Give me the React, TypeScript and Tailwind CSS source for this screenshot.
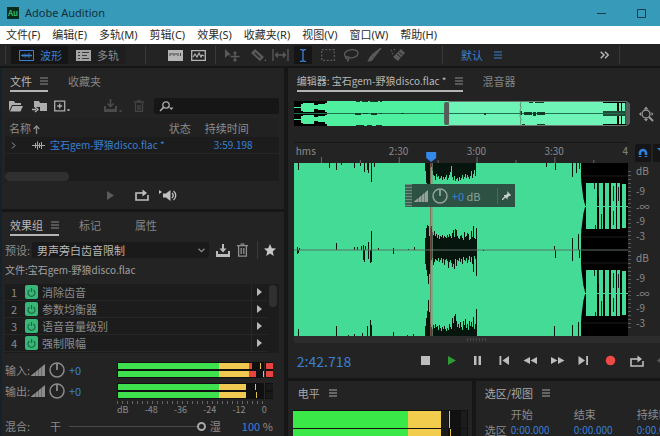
import React from 'react';
import clsx from 'clsx';

const MENUS = ['文件(F)', '编辑(E)', '多轨(M)', '剪辑(C)', '效果(S)', '收藏夹(R)', '视图(V)', '窗口(W)', '帮助(H)'];
const EFFECTS = ['消除齿音', '参数均衡器', '语音音量级别', '强制限幅'];
const FILE_NAME = '宝石gem-野狼disco.flac';

// One unit wide columns growing from a base line, dir 1 goes down and -1 goes up
const columns = (x0: number, base: number, dir: number, depths: number[]): string =>
  depths.map((d, i) => `M${x0 + i} ${base}h1v${d * dir}h-1z`).join('');

const spikes = (base: number, dir: number, list: number[][]): string =>
  list.map(([x, d]) => `M${x} ${base}h1v${d * dir}h-1z`).join('');

const BREAK_EDGE = [
  8, 20, 22, 24, 22, 5, 4, 8, 12, 13, 17, 11, 14, 13, 16, 15, 13, 17, 14, 16, 14, 12, 17, 15, 12, 9, 3, 14, 17, 13, 18, 16, 15,
  18, 14, 17, 15, 12, 16, 14, 11, 15, 12, 14, 16, 13, 8, 15, 11, 7, 13,
];
const BREAK_UP = [
  12, 22, 25, 24, 14, 22, 24, 18, 15, 19, 14, 16, 12, 15, 11, 14, 13, 15, 12, 14, 13, 12, 15, 13, 16, 14, 12, 17, 20, 13, 21, 20,
  14, 12, 11, 14, 15, 12, 10, 18, 13, 14, 17, 16, 10, 11, 19, 13, 24, 12, 11, 22,
];
const BREAK_DOWN = [
  14, 20, 26, 34, 24, 12, 10, 8, 15, 12, 9, 10, 11, 8, 12, 10, 8, 13, 9, 15, 10, 9, 11, 18, 12, 10, 13, 17, 14, 19, 9, 16, 10,
  11, 8, 12, 9, 14, 7, 10, 11, 8, 13, 10, 6, 12, 7, 14, 22, 6, 9, 26,
];
const BREAK_LOW = [
  10, 18, 25, 36, 24, 12, 9, 7, 11, 8, 12, 9, 10, 6, 11, 8, 5, 9, 7, 10, 7, 5, 8, 6, 12, 9, 7, 18, 13, 20, 22, 15, 9, 12, 8, 14,
  9, 6, 15, 11, 17, 8, 12, 6, 15, 10, 14, 9, 19, 7, 12, 27,
];

const TOP_SPIKES = [[4, 7], [35, 5], [42, 7], [47, 2], [60, 5], [66, 3], [70, 9], [73, 7], [74, 10], [77, 19], [80, 4], [253, 4], [262, 7], [279, 14], [283, 10], [286, 6]];
const MID_UP = [[3, 3], [5, 2], [42, 7], [60, 3], [63, 3], [67, 4], [69, 5], [71, 4], [74, 8], [77, 19], [84, 2], [99, 2], [114, 1], [120, 3], [261, 4], [279, 12], [285, 16]];
const MID_DOWN = [[3, 4], [4, 3], [69, 10], [70, 12], [74, 9], [76, 13], [77, 12], [99, 4], [189, 1], [262, 8], [279, 11], [286, 8]];
const LOW_SPIKES = [[4, 7], [42, 10], [54, 1], [60, 2], [68, 3], [73, 10], [76, 16], [77, 11], [99, 4], [113, 1], [119, 2], [261, 10], [279, 11], [285, 14]];

interface IconProps {
  w?: number;
  h?: number;
  className?: string;
  children: React.ReactNode;
}

const Icon: React.FC<IconProps> = ({ w = 16, h = 16, className, children }) => (
  <svg width={w} height={h} viewBox={`0 0 ${w} ${h}`} fill="none" stroke="currentColor" strokeWidth="1.3" className={clsx('shrink-0', className)} aria-hidden="true">
    {children}
  </svg>
);

const Burger: React.FC<{ className?: string }> = ({ className }) => (
  <Icon w={8} h={8} className={className}>
    <path d="M0 1h8M0 4h8M0 7h8" strokeWidth="1" />
  </Icon>
);

const LoopIcon = () => (
  <Icon w={14} h={12}>
    <path d="M4 4H1v7h12V6" strokeWidth="1.6" />
    <path d="M4 4h4" strokeWidth="1.6" />
    <path d="M7.500 0.500L12 4l-4.500 3.500z" fill="currentColor" stroke="none" />
  </Icon>
);

const VolumeRamp = () => (
  <Icon w={14} h={12}>
    <path d="M0 11.500L14 0v12H0z" fill="currentColor" stroke="none" />
    <path d="M4.500 12V6M7.500 12V4M10.500 12V2" stroke="#000" strokeOpacity=".35" strokeWidth=".7" />
  </Icon>
);

const Knob = () => (
  <Icon w={16} h={16}>
    <circle cx="8" cy="8" r="7" strokeWidth="1.5" />
    <path d="M8 1v7" strokeWidth="1.8" />
  </Icon>
);

interface TabsProps {
  active: string;
  others: string[];
  small?: boolean;
}

const PanelTabs: React.FC<TabsProps> = ({ active, others, small }) => (
  <div role="tablist" className="flex h-6 shrink-0 items-end gap-5">
    <button role="tab" aria-selected="true" className="flex h-5 items-center gap-2 whitespace-nowrap border-b-2 border-[#b4b4b4] text-[#b8b8b8]">
      <span className={clsx(small && 'text-[10px]')}>{active}</span>
      <Burger className="text-[#8c8c8c]" />
    </button>
    {others.map(name => (
      <button key={name} role="tab" aria-selected="false" className="h-5 min-w-9 whitespace-nowrap border-b-2 border-transparent text-left text-[#858585]">
        {name}
      </button>
    ))}
  </div>
);

const TitleBar = () => (
  <header className="flex h-[26px] shrink-0 items-center bg-[#379ab9] pl-[7px] pr-[14px]">
    <span className="flex h-3 w-3 items-center justify-center bg-[#082c1c] text-[8px] font-bold leading-none text-[#2fb56b]">Au</span>
    <h1 className="ml-1.5 flex-1 font-['Noto_Sans',sans-serif] text-[11px] leading-4 text-[#12303b]">Adobe Audition</h1>
    <button aria-label="最小化" className="text-[#173c49]">
      <Icon w={9} h={9}>
        <path d="M0 4.500h9" strokeWidth="1" />
      </Icon>
    </button>
    <button aria-label="最大化" className="ml-[31px] text-[#173c49]">
      <Icon w={9} h={9}>
        <path d="M.5.5h8v8h-8z" strokeWidth="1" />
      </Icon>
    </button>
  </header>
);

const MenuBar = () => (
  <nav className="flex h-[18px] shrink-0 items-center gap-3 bg-white pl-1.5 font-['Noto_Sans','Noto_Sans_CJK_SC',sans-serif] text-[#2c2c2c]">
    {MENUS.map(m => (
      <button key={m} className="whitespace-nowrap">{m}</button>
    ))}
  </nav>
);

const Divider = ({ className }: { className?: string }) => <span className={clsx('h-[18px] w-px shrink-0 bg-[#393939]', className)} />;

const Toolbar = () => (
  <div className="flex h-[22px] shrink-0 items-center bg-[#232323] pl-[5px] text-[#8b8b8b]">
    <Divider />
    <div className="ml-[5px] flex h-[18px] bg-[#1e1e1e]">
      <button aria-pressed="true" className="flex w-[57px] items-center gap-1.5 bg-[#151515] pl-2 text-[#3a80d2]">
        <Icon w={15} h={11}>
          <path d="M.5.5h14v10H.5z" strokeWidth="1" />
          <path d="M2 5.500h11M4 4v3M6 3.500v4M8 4v3M10 3v5M12 4.500v2" strokeWidth="1" />
        </Icon>
        波形
      </button>
      <button aria-pressed="false" className="flex w-[57px] items-center gap-1.5 pl-2">
        <Icon w={15} h={11}>
          <path d="M0 0h15v11H0z" fill="#a4a4a4" stroke="none" />
          <path d="M2 2.500h2M6 2.500h7M2 5.500h2M6 5.500h5M2 8.500h2M6 8.500h7" stroke="#3c3c3c" strokeWidth="1" />
        </Icon>
        多轨
      </button>
    </div>
    <Divider className="ml-5" />
    <button aria-label="频谱频率显示器" className="ml-[22px] text-[#b5b5b5]">
      <Icon w={15} h={11}>
        <path d="M0 0h15v11H0z" fill="currentColor" stroke="none" />
        <path d="M2 6V3M4 5V3M6 6V3M8 5V3M10 6V3M12.500 6V3" stroke="#444" strokeWidth="1" />
      </Icon>
    </button>
    <button aria-label="频谱音高显示器" className="ml-2 text-[#b5b5b5]">
      <Icon w={15} h={11}>
        <path d="M.7.7h13.600v9.600H.7z" />
        <path d="M2 7l2-3 2 3 2-4 2 4 1-2 2 1" strokeWidth="1.200" />
      </Icon>
    </button>
    <Divider className="ml-[9px]" />
    <button aria-label="移动工具" className="ml-2 text-[#5a5a5a]">
      <Icon w={16} h={14}>
        <path d="M1 1v9l2.500-2.500L7 7z" fill="currentColor" stroke="none" />
        <path d="M11 4v9M6.500 8.500h9M9.500 5.500L11 4l1.500 1.500M9.500 11.500L11 13l1.500-1.500" />
      </Icon>
    </button>
    <button aria-label="切断所选剪辑工具" className="ml-[10px] text-[#5a5a5a]">
      <Icon w={16} h={14}>
        <path d="M5 1l9 8-4 4-9-8z" fill="currentColor" stroke="none" />
        <path d="M5 5l5 4.500" stroke="#232323" />
        <path d="M14 13h2v-2z" fill="currentColor" stroke="none" />
      </Icon>
    </button>
    <button aria-label="滑动工具" className="ml-1.5 text-[#5a5a5a]">
      <Icon w={17} h={12}>
        <path d="M1 0v12M16 0v12M4 6h9M6 3.500L3.500 6 6 8.500M11 3.500L13.500 6 11 8.500" />
      </Icon>
    </button>
    <button aria-label="时间选择工具" aria-pressed="true" className="ml-[5px] flex h-[18px] w-[18px] items-center justify-center bg-[#151515] text-[#3a80d2]">
      <Icon w={8} h={13}>
        <path d="M1 .7h2l1 1 1-1h2M1 12.300h2l1-1 1 1h2M4 2v9" />
      </Icon>
    </button>
    <button aria-label="框选工具" className="ml-[9px] text-[#5a5a5a]">
      <Icon w={14} h={12}>
        <path d="M.7.7h12.600v10.600H.7z" strokeDasharray="2 1.600" />
      </Icon>
    </button>
    <button aria-label="套索选择工具" className="ml-2 text-[#5a5a5a]">
      <Icon w={16} h={13}>
        <path d="M4 8.500C0 7 1 2.500 6 1.200s9 0 9 3-5 5.300-8 4.500c-2-.6-3-1.800-4-.5s1 2 2 1.300 1 2-1 3" />
      </Icon>
    </button>
    <button aria-label="画笔选择工具" className="ml-[7px] text-[#5a5a5a]">
      <Icon w={16} h={14}>
        <path d="M15 0L8 9 6 7z" fill="currentColor" />
        <path d="M5.500 7.500l2.500 2.500c-1 3-4 3.500-7 3.500 2-1 1.500-5 4.500-6z" fill="currentColor" stroke="none" />
      </Icon>
    </button>
    <button aria-label="污点修复画笔工具" className="ml-2 text-[#5a5a5a]">
      <Icon w={16} h={14}>
        <path d="M11 1l4 4-7 8-5-4z" fill="currentColor" stroke="none" />
        <path d="M7 6l4 3.500M9 4l3.500 3.200" stroke="#232323" strokeWidth="1" />
        <path d="M1 3l1-1M4 2l1-1M2 6l1-1" />
      </Icon>
    </button>
    <Divider className="ml-9" />
    <button className="ml-[18px] flex items-center gap-[11px] whitespace-nowrap text-[#3a80d2]">
      默认
      <Burger />
    </button>
    <span className="flex-1" />
    <button aria-label="更多" className="text-[#b5b5b5]">
      <Icon w={9} h={8}>
        <path d="M.7.7L4 4 .7 7.300M5 .7L8.300 4 5 7.300" strokeWidth="1.500" />
      </Icon>
    </button>
    <Divider className="ml-[10px] mr-10" />
  </div>
);

const FilesPanel = () => (
  <section className="flex h-[141px] shrink-0 flex-col bg-[#232323] pl-[3px] pr-[5px]">
    <div className="pl-[5px]">
      <PanelTabs active="文件" others={['收藏夹']} />
    </div>
    <div className="mt-1.5 flex h-4 items-center pl-1 text-[#adadad]">
      <button aria-label="打开文件">
        <Icon w={14} h={12}>
          <path d="M0 11V1h5l1 2h6v2H3z" fill="currentColor" stroke="none" />
          <path d="M3.500 6H14l-2.500 5.500H1z" fill="currentColor" stroke="none" />
        </Icon>
      </button>
      <button aria-label="导入文件" className="ml-[9px]">
        <Icon w={15} h={13}>
          <path d="M2 7V1h5l1 2h7v8H8V7z" fill="currentColor" stroke="none" />
          <path d="M0 9.500h4M3 7l3 2.500L3 12" strokeWidth="1.500" />
        </Icon>
      </button>
      <button aria-label="新建文件" className="ml-[7px]">
        <Icon w={16} h={12}>
          <path d="M.7 1.200h10v9.600H.7zM5.700 3.500v5M3.200 6h5" />
          <path d="M13.500 9h2v2h-2z" fill="currentColor" stroke="none" />
        </Icon>
      </button>
      <button aria-label="插入到多轨混音中" className="ml-[34px] text-[#4a4a4a]">
        <Icon w={18} h={14}>
          <path d="M0 7h2v3h9V7h2v6H0z" fill="currentColor" stroke="none" />
          <path d="M6.500 0v7M3.500 4.500l3 3 3-3" strokeWidth="1.600" />
          <path d="M15.500 11h2v2h-2z" fill="currentColor" stroke="none" />
        </Icon>
      </button>
      <button aria-label="删除文件" className="ml-3 text-[#444]">
        <Icon w={10} h={12}>
          <path d="M0 2h10M3 1h4M1.500 3v8.300h7V3M4 5v5M6 5v5" />
        </Icon>
      </button>
      <div className="relative ml-[10px] h-4 flex-1 rounded-xs bg-[#161616]">
        <Icon w={15} h={11} className="absolute left-[5px] top-[3px]">
          <circle cx="7" cy="4" r="3.200" />
          <path d="M4.700 6.300L1 10" strokeWidth="1.600" />
          <path d="M10 6.500h4.500l-2.200 2.500z" fill="currentColor" stroke="none" />
        </Icon>
        <input type="search" aria-label="搜索文件" className="h-4 w-full bg-transparent pl-6 outline-none" />
      </div>
    </div>
    <div className="mt-1 flex flex-1 flex-col bg-[#1c1c1c]">
      <table className="w-full table-fixed border-collapse text-left">
        <colgroup>
          <col />
          <col className="w-9" />
          <col className="w-[74px]" />
        </colgroup>
        <thead className="bg-[#212121] text-[#8c8c8c]">
          <tr className="h-[19px]">
            <th className="p-0 pl-1 font-normal">
              名称
              <Icon w={7} h={9} className="ml-0.5 inline align-[-1px]">
                <path d="M3.500 9V1M.7 4l2.800-3 2.800 3" />
              </Icon>
            </th>
            <th className="p-0 font-normal">状态</th>
            <th className="whitespace-nowrap p-0 font-normal">持续时间</th>
          </tr>
        </thead>
        <tbody className="text-[10px] text-[#3a80d2]">
          <tr className="h-4 border-b border-[#262626]">
            <td className="p-0">
              <div className="flex items-center pl-[6px]">
                <Icon w={5} h={7} className="text-[#9a9a9a]">
                  <path d="M1 .5l3 3-3 3" strokeWidth="1" />
                </Icon>
                <Icon w={13} h={9} className="ml-[16px] text-[#a8a8a8]">
                  <path d="M0 4.500h13M3.500 2v5M5.500.5v8M7.500 2v5M9.500 1v7" strokeWidth="1" />
                </Icon>
                <span className="ml-[5px] whitespace-nowrap">{FILE_NAME} *</span>
              </div>
            </td>
            <td className="p-0" />
            <td className="p-0 pl-[9px]">3:59.198</td>
          </tr>
        </tbody>
      </table>
      <div className="mt-auto h-[9px] w-16 rounded-full bg-[#303030]" />
    </div>
    <div className="flex h-7 shrink-0 items-center justify-center gap-5 text-[#c0c0c0]">
      <button aria-label="播放" className="text-[#5a5a5a]">
        <Icon w={9} h={9}>
          <path d="M1 0l7 4.500L1 9z" fill="currentColor" stroke="none" />
        </Icon>
      </button>
      <div className="flex items-center gap-[10px]">
        <button aria-label="循环播放">
          <LoopIcon />
        </button>
        <button aria-label="自动播放">
          <Icon w={19} h={13}>
            <path d="M0 1l3 2-3 2z" fill="currentColor" stroke="none" />
            <path d="M4 4.500h3L11.500 1v11L7 8.500H4z" fill="currentColor" stroke="none" />
            <path d="M13 4c1.500 1.500 1.500 3.500 0 5M14.500 2c3 2.500 3 6.500 0 9" />
          </Icon>
        </button>
      </div>
    </div>
  </section>
);

interface MeterProps {
  bars: number[][];
  clip: boolean;
}

// Each bar: end of yellow, end of red, peak mark
const Meter: React.FC<MeterProps> = ({ bars, clip }) => (
  <svg viewBox="0 0 155 16" preserveAspectRatio="none" className="h-4 w-full bg-[#101010]" shapeRendering="crispEdges" aria-hidden="true">
    {bars.map(([yellow, red, peak], i) => (
      <g key={i}>
        <rect x="1" y={1 + i * 8} width="100" height="6" fill="#3fe04e" />
        <rect x="101" y={1 + i * 8} width={yellow - 101} height="6" fill="#efc950" />
        <rect x={yellow} y={1 + i * 8} width={red - yellow} height="6" fill="#e8443f" />
        <rect x={peak} y={1 + i * 8} width="1" height="6" fill="#e3c34c" />
        <rect x="146" y="0" width="1" height="16" fill="#2a2a2a" />
        <rect x="148" y={1 + i * 8} width="7" height="6" fill={clip ? '#e8443f' : '#191919'} />
      </g>
    ))}
  </svg>
);

const LevelRow: React.FC<{ label: string; children: React.ReactNode }> = ({ label, children }) => (
  <div className="flex h-[21px] items-center pr-[6px]">
    <span className="w-[26px] shrink-0 whitespace-nowrap">{label}</span>
    <VolumeRamp />
    <button aria-label={`${label} 增益`} className="ml-1 shrink-0">
      <Knob />
    </button>
    <span className="ml-1 w-12 shrink-0 text-[#3a80d2]">+0</span>
    <div className="min-w-0 flex-1">{children}</div>
  </div>
);

const EffectsPanel = () => (
  <section className="flex min-h-0 flex-1 flex-col overflow-hidden bg-[#232323] pl-[3px] pr-[5px] text-[#8b8b8b]">
    <div className="pl-[5px]">
      <PanelTabs active="效果组" others={['标记', '属性']} />
    </div>
    <div className="mt-1.5 flex h-4 shrink-0 items-center">
      <label htmlFor="preset" className="w-[27px] whitespace-nowrap">预设:</label>
      <div className="relative h-4 flex-1">
        <select id="preset" defaultValue="deess" className="h-4 w-full appearance-none rounded-xs bg-[#1a1a1a] pl-[5px] text-[#b8b8b8] outline-none">
          <option value="deess">男声旁白齿音限制</option>
        </select>
        <Icon w={7} h={5} className="pointer-events-none absolute right-1 top-1.5">
          <path d="M.5.7l3 3 3-3" />
        </Icon>
      </div>
      <button aria-label="保存预设" className="ml-[7px] text-[#bababa]">
        <Icon w={14} h={13}>
          <path d="M0 7h2v3h10V7h2v6H0z" fill="currentColor" stroke="none" />
          <path d="M7 0v5" strokeWidth="2" />
          <path d="M3.500 4.500h7L7 8.500z" fill="currentColor" stroke="none" />
        </Icon>
      </button>
      <button aria-label="删除预设" className="ml-[7px] text-[#8f8f8f]">
        <Icon w={11} h={14}>
          <path d="M0 2.600h11M3.500 1.200h4M1.600 3v10.200h7.800V3M4.200 5v6M6.800 5v6" />
        </Icon>
      </button>
      <Divider className="ml-[9px]" />
      <button aria-label="收藏" className="ml-[6px] mr-[3px] text-[#c8c8c8]">
        <Icon w={12} h={12}>
          <path d="M6 0l1.800 4.200 4.200.3-3.300 2.900L9.800 12 6 9.500 2.200 12l1.100-4.600L0 4.500l4.200-.3z" fill="currentColor" stroke="none" />
        </Icon>
      </button>
    </div>
    <p className="mt-1 h-4 shrink-0 text-[10px] leading-4 text-[#a0a0a0]">文件:{FILE_NAME}</p>
    <div className="mt-1.5 flex h-[69px] shrink-0 overflow-hidden bg-[#1c1c1c]">
      <ol className="flex-1">
        {EFFECTS.map((name, i) => (
          <li key={name} className="flex h-[17px] items-center border-b border-[#272727]">
            <span className="w-5 pl-1.5">{i + 1}</span>
            <button aria-label="切换开关状态" className="flex h-[14px] w-[13px] items-center justify-center rounded-xs bg-[#38b778] text-[#1c6a44]">
              <Icon w={9} h={9}>
                <path d="M2.500 2a3.500 3.500 0 1 0 4 0M4.500 0v4" strokeWidth="1.200" />
              </Icon>
            </button>
            <span className="ml-1 flex-1">{name}</span>
            <button aria-label="更多选项" className="flex h-[17px] w-4 items-center border-l border-[#272727] pl-[5px] text-[#b8b8b8]">
              <Icon w={5} h={8}>
                <path d="M0 0l5 4-5 4z" fill="currentColor" stroke="none" />
              </Icon>
            </button>
          </li>
        ))}
      </ol>
      <div className="w-3 pl-0.5 pt-px">
        <div className="h-[22px] w-2 rounded-full bg-[#303030]" />
      </div>
    </div>
    <div className="mt-1.5">
      <LevelRow label="输入:">
        <Meter bars={[[131, 134, 142], [131, 138, 145]]} clip />
      </LevelRow>
      <LevelRow label="输出:">
        <Meter bars={[[128, 128, 137], [128, 128, 138]]} clip={false} />
      </LevelRow>
    </div>
    <div className="ml-[112px] mr-[6px] flex h-4 shrink-0 flex-col text-[9px] leading-3">
      <div className="h-[3px] w-[147px] bg-[repeating-linear-gradient(to_right,#666_0_1px,transparent_1px_5px)]" />
      <div className="flex justify-between pr-1.5">
        {['dB', '-48', '-36', '-24', '-12', '0'].map(t => (
          <span key={t}>{t}</span>
        ))}
      </div>
    </div>
    <div className="flex h-[18px] shrink-0 items-center pr-[6px]">
      <label htmlFor="mix" className="w-[45px]">混合:</label>
      <span>干</span>
      <input
        id="mix"
        type="range"
        defaultValue={100}
        className="ml-2 h-3 min-w-0 flex-1 appearance-none bg-[linear-gradient(#4a4a4a,#4a4a4a)] bg-[length:100%_1px] bg-center bg-no-repeat [&::-webkit-slider-thumb]:h-[9px] [&::-webkit-slider-thumb]:w-[9px] [&::-webkit-slider-thumb]:appearance-none [&::-webkit-slider-thumb]:rounded-full [&::-webkit-slider-thumb]:border-2 [&::-webkit-slider-thumb]:border-[#a8a8a8] [&::-webkit-slider-thumb]:bg-[#232323]"
      />
      <span className="ml-1">湿</span>
      <span className="ml-[21px] whitespace-nowrap">
        <span className="text-[#3a80d2]">100</span> %
      </span>
    </div>
  </section>
);

const Overview = () => (
  <div className="flex items-center">
    <svg viewBox="0 0 336 25" preserveAspectRatio="none" className="h-[25px] min-w-0 flex-1 rounded-r-sm bg-black" aria-hidden="true">
      <g shapeRendering="crispEdges">
        <path d="M33 0h276v25H33z" fill="#4fefa0" />
        {[6, 18].map(y => (
          <g key={y} fill="#4fefa0">
            <rect x="0" y={y} width="8" height="1" />
            <rect x="7" y={y - 3} width="3" height="7" />
            <rect x="9" y={y - 4} width="11" height="9" />
            <rect x="20" y={y - 2} width="4" height="4" />
            <rect x="24" y={y - 3} width="8" height="6" />
            <rect x="31" y={y - 4} width="2" height="9" />
          </g>
        ))}
        <path d="M153 0h156v25H153z" fill="#6ff4b7" />
        {[2, 15].map(y => (
          <g key={y} fill="#6ff4b7">
            <rect x="309" y={y} width="14" height="8" />
            <rect x="325" y={y} width="2" height="8" />
            <rect x="328" y={y} width="3" height="8" />
          </g>
        ))}
        <path d="M309 10h22v5h-22z" fill="#234a38" />
        <path d="M0 12h331" stroke="#1d7350" />
        <path
          d="M62 0h4v1h-4zM68 0h6v1h-6zM76 0h8v1h-8zM86 0h2v1h-2zM61 12h6v2h-6zM69 12h5v1h-5zM77 12h6v2h-6zM86 12h2v1h-2zM107 12h3v1h-3zM190 12h2v2h-2zM62 24h8v1h-8zM73 24h5v1h-5zM82 24h6v1h-6zM226 10h2v4h-2zM230 11h8v3h-8zM239 11h3v4h-3zM243 11h8v3h-8zM228 0h3v1h-3zM235 1h4v1h-4zM241 0h9v2h-9zM228 23h3v2h-3zM235 24h5v1h-5zM243 23h8v2h-8z"
          fill="#123a28"
        />
      </g>
      <path d="M227 1c-3 3 2 5-1 8v7c3 3-2 5 1 8" stroke="#5b8f76" fill="none" />
      <rect x="152.500" y=".5" width="183" height="24" rx="4" fill="none" stroke="#6a7a72" />
      <rect x="150" y="1" width="5" height="23" rx="2" fill="#565c59" />
      <rect x="331" y="1" width="4" height="23" rx="2" fill="#565c59" />
    </svg>
    <button aria-label="全部缩小" className="w-[30px] pl-[9px] text-[#9a9a9a]">
      <Icon w={15} h={16}>
        <circle cx="7" cy="8" r="4" />
        <path d="M10 11l4 4" strokeWidth="2" />
        <path d="M5 3l2-2.500L9 3zM5 13l2 2.500L9 13zM2 6L0 8l2 2zM12.500 6l2 2-2 2z" fill="currentColor" stroke="none" />
      </Icon>
    </button>
  </div>
);

const Waveform = () => (
  <svg viewBox="0 0 335 173" preserveAspectRatio="none" className="block h-full w-full bg-[#43db95]" shapeRendering="crispEdges" aria-hidden="true">
    <g fill="#06150e">
      <path d={spikes(0, 1, TOP_SPIKES) + columns(131, 0, 1, BREAK_EDGE)} />
      <path d={spikes(87, -1, MID_UP) + columns(131, 87, -1, BREAK_UP)} />
      <path d={spikes(87, 1, MID_DOWN) + columns(131, 87, 1, BREAK_DOWN)} />
      <path d={spikes(173, -1, LOW_SPIKES) + columns(131, 173, -1, BREAK_LOW)} />
    </g>
    <path d="M288 0h47v173h-47z" fill="#000" />
    {[43, 130].map(y => (
      <g key={y} fill="#43db95">
        <path d={`M287 ${y - 42}l1 18 2 16 2 8-2 8-2 16-1 18z`} shapeRendering="auto" />
        <path d={`M293 ${y - 23}h11v46h-11zM306 ${y - 23}h4v46h-4zM312 ${y - 23}h4v46h-4zM318 ${y - 23}h5v46h-5zM324 ${y - 23}h3v46h-3zM329 ${y - 22}h4v44h-4z`} />
        <path d={`M287 ${y}h48v1h-48z`} />
        <path d={`M301 ${y - 23}h1v6h-1zM305 ${y - 23}h1v14h-1zM320 ${y - 20}h1v15h-1zM320 ${y + 5}h1v14h-1zM325 ${y - 19}h1v14h-1zM308 ${y + 8}h1v15h-1zM302 ${y + 19}h1v4h-1z`} fill="#0a2b1c" />
      </g>
    ))}
    <path d="M289 13h46M289 74h46M289 100h46M289 160h46" stroke="#1c1c1c" />
    <path d="M0 87h335" stroke="#5d6f62" />
    <path d="M137 0v173" stroke="#8a5a4c" />
    <path d="M138.500 0v173" stroke="#7f9a86" />
  </svg>
);

const DbScale = () => (
  <div className="flex flex-1 flex-col">
    <span className="mt-px">dB</span>
    <span className="mt-1.5">-9</span>
    <span className="mt-0.5">-∞</span>
    <span>-9</span>
    <span className="mt-px">-3</span>
  </div>
);

const Hud = () => (
  <div className="absolute left-[111px] top-[21px] flex h-[23px] w-[110px] items-center bg-[#2d5143] text-[#8fa398]">
    <div className="h-full w-[7px] bg-[repeating-linear-gradient(to_bottom,#6d8a7c_0_1px,#3d6152_1px_3px)]" />
    <div className="ml-0.5 flex items-center gap-1">
      <VolumeRamp />
      <button aria-label="调节振幅">
        <Knob />
      </button>
    </div>
    <span className="ml-1 flex-1 whitespace-nowrap">
      <span className="text-[#3a80d2]">+0</span> dB
    </span>
    <span className="h-4 w-px bg-[#456b5b]" />
    <button aria-label="固定" className="ml-1 mr-1 text-[#c9d3ce]">
      <Icon w={9} h={9}>
        <path d="M5 0l4 4-1 1-1 0-1.500 1.500v2L2 5l0-1h2L5.500 2.500z" fill="currentColor" stroke="none" />
        <path d="M0 9l4-4" />
      </Icon>
    </button>
  </div>
);

const RULER_LABELS = [
  { text: '2:30', at: 105 },
  { text: '3:00', at: 183 },
  { text: '3:30', at: 261 },
];

const Ruler = () => (
  <div className="relative h-[21px] overflow-hidden border-t border-[#171717] text-[10px] leading-4 text-[#8b8b8b]">
    <span className="absolute left-0.5 top-0">hms</span>
    {RULER_LABELS.map(l => (
      <span key={l.text} className="absolute top-0 -translate-x-1/2" style={{ left: `${(l.at / 335) * 100}%` }}>
        {l.text}
      </span>
    ))}
    <span className="absolute right-0 top-0">4</span>
    <svg viewBox="0 0 335 20" preserveAspectRatio="none" className="absolute inset-0 h-full w-full" aria-hidden="true">
      <path d="M27.500 14v6M105.500 14v6M183.500 14v6M261.500 14v6M66.500 17v3M144.500 17v3M222.500 17v3M300.500 17v3" stroke="#6a6a6a" />
      <path d="M132.500 9h10v6l-5 4-5-4z" fill="#3489e8" />
    </svg>
  </div>
);

const TRANSPORT = [
  { label: '停止', color: 'text-[#bdbdbd]', icon: <path d="M3 2h9v9H3z" fill="currentColor" stroke="none" /> },
  { label: '播放', color: 'text-[#2f9a35]', icon: <path d="M4 2l8 4.500L4 11z" fill="currentColor" stroke="none" /> },
  { label: '暂停', color: 'text-[#bdbdbd]', icon: <path d="M4 2h2.500v9H4zM8.500 2H11v9H8.500z" fill="currentColor" stroke="none" /> },
  { label: '移到上一个', color: 'text-[#bdbdbd]', icon: <path d="M2.500 2h1.800v9H2.500zM12 2v9L5.500 6.500z" fill="currentColor" stroke="none" /> },
  { label: '快退', color: 'text-[#bdbdbd]', icon: <path d="M7 3v7L.5 6.500zM14 3v7L7.500 6.500z" fill="currentColor" stroke="none" /> },
  { label: '快进', color: 'text-[#bdbdbd]', icon: <path d="M1 3v7l6.500-3.500zM8 3v7l6.500-3.500z" fill="currentColor" stroke="none" /> },
  { label: '移到下一个', color: 'text-[#bdbdbd]', icon: <path d="M2.500 2v9L9 6.500zM10.200 2H12v9h-1.800z" fill="currentColor" stroke="none" /> },
  { label: '录制', color: 'text-[#ec4a45]', icon: <circle cx="7.500" cy="6.500" r="4.800" fill="currentColor" stroke="none" /> },
];

const Transport = () => (
  <div className="flex h-[35px] shrink-0 items-center pl-[3px] text-[#bdbdbd]">
    <output className="w-[115px] text-[14px] leading-5 text-[#3a80d2]">2:42.718</output>
    <div className="grid flex-1 grid-cols-9 justify-items-center">
      {TRANSPORT.map(b => (
        <button key={b.label} aria-label={b.label} className={b.color}>
          <Icon w={15} h={13}>{b.icon}</Icon>
        </button>
      ))}
      <button aria-label="循环播放">
        <LoopIcon />
      </button>
    </div>
    <button aria-label="跳过所选项目" className="flex w-[10px] justify-end text-[#5a5a5a]">
      <Icon w={3} h={5}>
        <path d="M3 0v5L0 2.500z" fill="currentColor" stroke="none" />
      </Icon>
    </button>
  </div>
);

const EditorPanel = () => (
  <section className="flex min-h-0 flex-1 flex-col bg-[#232323] pl-1.5">
    <div className="pl-[3px]">
      <PanelTabs active={`编辑器: ${FILE_NAME} *`} others={['混音器']} small />
    </div>
    <div className="mt-[9px]">
      <Overview />
    </div>
    <div className="mt-4 flex min-h-0 flex-1">
      <div className="flex min-w-0 flex-1 flex-col">
        <Ruler />
        <div className="relative min-h-0 flex-1">
          <Waveform />
          <Hud />
        </div>
      </div>
      <div className="flex w-8 flex-col overflow-hidden text-[10px] leading-[14px] text-[#8b8b8b]">
        <div className="flex h-[21px] shrink-0 items-center gap-0.5 pl-[7px]">
          <button aria-label="对齐" aria-pressed="true" className="flex h-[18px] w-4 shrink-0 items-center justify-center rounded-xs bg-[#151515] text-[#2f80e0]">
            <Icon w={10} h={10}>
              <path d="M2 9V5a3 3 0 0 1 6 0v4" strokeWidth="2.600" />
              <path d="M0 7.500h4M6 7.500h4" stroke="#151515" strokeWidth="1" />
            </Icon>
          </button>
          <button aria-label="节拍器" className="flex h-[18px] w-4 shrink-0 items-start bg-[#151515] pl-1 pt-1 text-[#2f80e0]">
            <Icon w={5} h={6}>
              <path d="M0 0h5v5z" fill="currentColor" stroke="none" />
            </Icon>
          </button>
        </div>
        <div className="flex min-h-0 flex-1">
          <div className="w-2 py-2">
            <div className="h-full w-[3px] bg-[repeating-linear-gradient(to_bottom,#5c5c5c_0_1px,transparent_1px_4px)]" />
          </div>
          <div className="flex flex-1 flex-col">
            <DbScale />
            <DbScale />
          </div>
        </div>
      </div>
    </div>
    <div className="flex h-[7px] shrink-0 items-center justify-center bg-[#2c2c2c]">
      <div className="h-[3px] w-5 bg-[repeating-linear-gradient(to_right,#484848_0_1px,transparent_1px_3px)]" />
    </div>
    <Transport />
  </section>
);

const PanelTitle: React.FC<{ children: React.ReactNode }> = ({ children }) => (
  <h2 className="flex h-[23px] items-center gap-[9px] text-[#a8a8a8]">
    {children}
    <Burger />
  </h2>
);

const LevelsPanel = () => (
  <section className="w-[184px] shrink-0 overflow-hidden bg-[#232323] pl-[5px] pr-1">
    <div className="pl-[5px]">
      <PanelTitle>电平</PanelTitle>
    </div>
    <svg viewBox="0 0 174 40" preserveAspectRatio="none" className="mt-1.5 h-10 w-full bg-[#111]" shapeRendering="crispEdges" aria-hidden="true">
      {[1, 19].map(y => (
        <g key={y}>
          <rect x="0" y={y} width="114" height="17" fill="#3ae847" />
          <rect x="114" y={y} width="33" height="17" fill="#f2cc4c" />
          <rect x={y === 1 ? 155 : 156} y={y} width="1" height="17" fill="#e3c34c" />
          <rect x="147" y={y} width="7" height="17" fill="#1c1c1c" />
          <rect x="167" y={y} width="6" height="17" fill="#1c1c1c" />
        </g>
      ))}
    </svg>
  </section>
);

const SelectionPanel = () => (
  <section className="min-w-0 flex-1 overflow-hidden bg-[#232323] pl-[9px] text-[#8b8b8b]">
    <PanelTitle>选区/视图</PanelTitle>
    <table className="w-[215px] table-fixed border-collapse text-left">
      <colgroup>
        <col className="w-[26px]" />
        <col />
        <col />
        <col />
      </colgroup>
      <thead>
        <tr className="h-5">
          <td className="p-0" />
          <th className="p-0 font-normal">开始</th>
          <th className="p-0 font-normal">结束</th>
          <th className="p-0 font-normal">持续时间</th>
        </tr>
      </thead>
      <tbody className="leading-3">
        <tr className="h-3">
          <th className="p-0 font-normal">选区</th>
          {['start', 'end', 'duration'].map(k => (
            <td key={k} className="p-0 text-[10px] text-[#3a80d2]">0:00.000</td>
          ))}
        </tr>
      </tbody>
    </table>
  </section>
);

export default function App() {
  return (
    <div className="flex h-screen flex-col overflow-hidden bg-[#161616] font-['Noto_Sans_CJK_SC',sans-serif] text-[11px] leading-4">
      <TitleBar />
      <MenuBar />
      <Toolbar />
      <main className="mt-0.5 flex min-h-0 flex-1 gap-1">
        <div className="flex w-[43%] shrink-0 flex-col gap-[3px] border-l-2 border-[#14222b]">
          <FilesPanel />
          <EffectsPanel />
        </div>
        <div className="flex min-w-0 flex-1 flex-col gap-[3px]">
          <EditorPanel />
          <div className="flex h-[55px] shrink-0 gap-1">
            <LevelsPanel />
            <SelectionPanel />
          </div>
        </div>
      </main>
    </div>
  );
}
